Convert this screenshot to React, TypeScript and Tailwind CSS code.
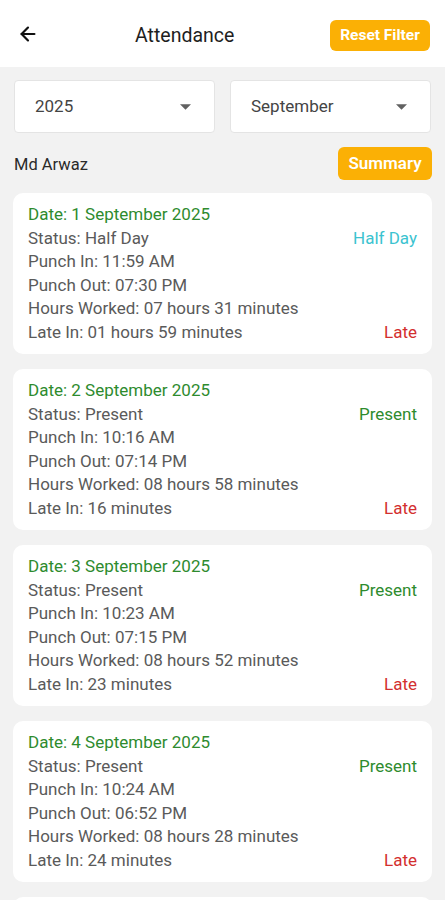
import { ArrowLeft } from "lucide-react";

type Entry = {
  date: string;
  status: string;
  punchIn: string;
  punchOut: string;
  hours: string;
  late: string;
};

const entries: Entry[] = [
  { date: "1 September 2025", status: "Half Day", punchIn: "11:59 AM", punchOut: "07:30 PM", hours: "07 hours 31 minutes", late: "01 hours 59 minutes" },
  { date: "2 September 2025", status: "Present", punchIn: "10:16 AM", punchOut: "07:14 PM", hours: "08 hours 58 minutes", late: "16 minutes" },
  { date: "3 September 2025", status: "Present", punchIn: "10:23 AM", punchOut: "07:15 PM", hours: "08 hours 52 minutes", late: "23 minutes" },
  { date: "4 September 2025", status: "Present", punchIn: "10:24 AM", punchOut: "06:52 PM", hours: "08 hours 28 minutes", late: "24 minutes" },
  { date: "5 September 2025", status: "Present", punchIn: "10:12 AM", punchOut: "07:02 PM", hours: "08 hours 50 minutes", late: "12 minutes" },
];

function Caret() {
  return (
    <svg width="11" height="6" viewBox="0 0 10 5" className="fill-[#616161]">
      <path d="M0 0h10L5 5z" />
    </svg>
  );
}

function Select({ value }: { value: string }) {
  return (
    <div className="flex h-[53px] flex-1 items-center justify-between rounded-[4px] border border-[#e4e4e4] bg-white pl-[20px] pr-[23px] text-[17px] text-[#444]">
      <span>{value}</span>
      <Caret />
    </div>
  );
}

function AttendanceCard({ entry }: { entry: Entry }) {
  const half = entry.status === "Half Day";
  return (
    <div className="rounded-[10px] bg-white px-[15px] py-[10px] text-[17px] leading-[23.5px] text-[#5a5a5a]">
      <div className="text-[#2e8b2e]">Date: {entry.date}</div>
      <div className="flex justify-between">
        <span>Status: {entry.status}</span>
        <span className={half ? "text-[#3cc3d0]" : "text-[#2e8b2e]"}>{entry.status}</span>
      </div>
      <div>Punch In: {entry.punchIn}</div>
      <div>Punch Out: {entry.punchOut}</div>
      <div>Hours Worked: {entry.hours}</div>
      <div className="flex justify-between">
        <span>Late In: {entry.late}</span>
        <span className="text-[#d32f2f]">Late</span>
      </div>
    </div>
  );
}

export default function App() {
  return (
    <div className="h-[900px] overflow-hidden bg-[#f2f2f2] font-['Roboto',sans-serif]">
      <header className="flex h-[67px] items-center bg-white pl-[17px] pr-[15px]">
        <ArrowLeft size={22} strokeWidth={2.4} className="text-[#111]" />
        <h1 className="ml-[96px] flex-1 pt-[4px] text-[19.5px] text-[#1e1e1e]">Attendance</h1>
        <button className="mt-[4px] h-[31px] w-[100px] rounded-[6px] bg-[#fbb005] text-[15.5px] font-bold text-white">
          Reset Filter
        </button>
      </header>

      <div className="flex gap-[15px] px-[14px] pt-[13px]">
        <Select value="2025" />
        <Select value="September" />
      </div>

      <div className="flex items-center justify-between pl-[14px] pr-[13px] pt-[14px]">
        <span className="pt-[4px] text-[16.5px] text-[#2a2a2a]">Md Arwaz</span>
        <button className="h-[33px] w-[94px] rounded-[6px] bg-[#fbb005] text-[17px] font-semibold text-white">
          Summary
        </button>
      </div>

      <div className="flex flex-col gap-[15px] px-[13px] pt-[13px]">
        {entries.map((e) => (
          <AttendanceCard key={e.date} entry={e} />
        ))}
      </div>
    </div>
  );
}
